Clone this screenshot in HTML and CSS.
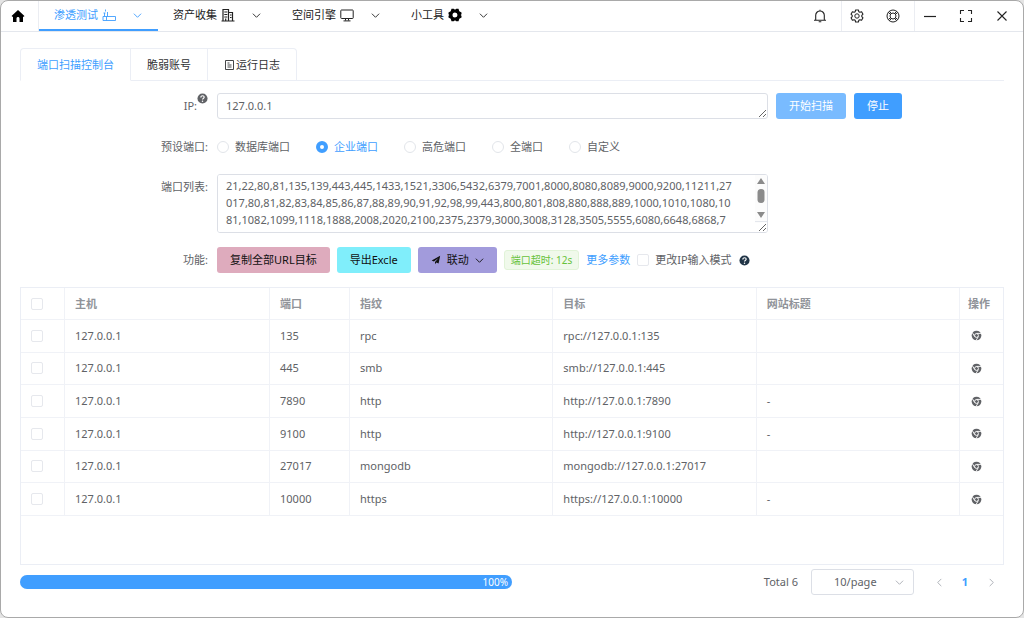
FILE: index.html
```html
<!DOCTYPE html>
<html lang="zh-CN">
<head>
<meta charset="utf-8">
<title>端口扫描控制台</title>
<link rel="stylesheet" href="styles.css">
</head>
<body>
<svg class="sprite" aria-hidden="true">
  <symbol id="down" viewBox="0 0 10 10"><path d="M1 3l4 4 4-4" fill="none" stroke="currentColor"/></symbol>
  <symbol id="help" viewBox="0 0 12 12"><circle cx="6" cy="6" r="5.5" fill="currentColor"/><path d="M4.2 4.8c0-2.4 3.7-2.3 3.6-.1C7.8 6 6 5.800 6 7.200" fill="none" stroke="#fff" stroke-width="1.300"/><circle cx="6" cy="8.900" r=".8" fill="#fff"/></symbol>
  <symbol id="chrome" viewBox="0 0 12 12"><circle cx="6" cy="6" r="5.300" fill="currentColor"/><circle cx="6" cy="6" r="2.100" fill="none" stroke="#fff" stroke-width="1"/><path d="M6 3.700h5.300M4 7.200L1.300 2.600M8 7.200l-2.700 4.600" stroke="#fff" stroke-width="1"/></symbol>
</svg>
<div class="window">
  <header class="topbar">
    <button class="home" aria-label="首页"><svg class="icon" viewBox="0 0 14 14"><path d="M7 1L.8 6.800c-.3.500 0 .9.500.9H2V13h3.500V9.500c0-2 3-2 3 0V13H12V7.700h.7c.5 0 .8-.4.5-.9z" fill="currentColor"/></svg></button>
    <nav class="menu">
      <button class="menu-item active"><span>渗透测试</span><svg class="icon" viewBox="0 0 14 14"><path d="M1 8.500h12.500v4H1zM4.500 8.500v4M2.500 8.500V5M1.500 5h2M3.500 1.500v2M5.500 8.500V4" fill="none" stroke="currentColor" stroke-width=".9"/></svg><svg class="arrow"><use href="#down"/></svg></button>
      <button class="menu-item"><span>资产收集</span><svg class="icon" viewBox="0 0 14 14"><path d="M2 13V1.500h5.500V13M7.500 4.500H11.500V13M.5 13h13M3.300 4h3M3.300 6.500h3M3.300 9h3M9 7h1.500M9 9.500h1.500M4.700 10.500V13" fill="none" stroke="currentColor" stroke-width="1.200"/></svg><svg class="arrow"><use href="#down"/></svg></button>
      <button class="menu-item"><span>空间引擎</span><svg class="icon" viewBox="0 0 14 14"><path d="M1.500 2h11a.7.700 0 0 1 .7.700v7.100a.7.700 0 0 1-.7.700h-11a.7.700 0 0 1-.7-.7V2.700a.7.700 0 0 1 .7-.7zM5.500 10.500v2M8.500 10.500v2M3.500 12.900h7" fill="none" stroke="currentColor"/></svg><svg class="arrow"><use href="#down"/></svg></button>
      <button class="menu-item"><span>小工具</span><svg class="icon" viewBox="0 0 14 14"><path d="M3.500.8h2.200L7 1.800 8.300.8h2.200l.8 2.500 2.200 1.200v1.700L12.600 7l.9.800v1.700l-2.200 1.200-.8 2.500H8.300L7 12.200l-1.300 1H3.500l-.8-2.500L.5 9.500V7.800L1.400 7l-.9-.8V4.500l2.200-1.200zM7 4.500a2.500 2.500 0 1 0 0 5 2.500 2.500 0 0 0 0-5z" fill="#000" fill-rule="evenodd"/></svg><svg class="arrow"><use href="#down"/></svg></button>
    </nav>
    <div class="tools">
      <button aria-label="通知"><svg class="icon" viewBox="0 0 14 14"><path d="M2.700 11V6.300a4.300 4.300 0 0 1 8.600 0V11M1 11.300h12M7 .8V2M5.700 12.800h2.600" fill="none" stroke="currentColor" stroke-width="1.100"/></svg></button>
    </div>
    <div class="tools ruled">
      <button aria-label="设置"><svg class="icon" viewBox="0 0 14 14"><path d="M5.600 1h2.800l.4 1.700 1.100.6 1.700-.5L13 5.200 11.800 6.400v1.200L13 8.800l-1.400 2.400-1.700-.5-1.100.6L8.400 13H5.600l-.4-1.700-1.100-.6-1.700.5L1 8.800l1.200-1.200V6.400L1 5.200l1.400-2.400 1.700.5 1.100-.6z" fill="none" stroke="currentColor" stroke-width="1.100" stroke-linejoin="round"/><circle cx="7" cy="7" r="2.200" fill="none" stroke="currentColor"/></svg></button>
      <button aria-label="帮助"><svg class="icon" viewBox="0 0 14 14"><g fill="none" stroke="currentColor"><circle cx="7" cy="7" r="6"/><circle cx="7" cy="7" r="3"/><path d="M2.300 3.500l2.200 1.800M3.500 2.300l1.800 2.200M11.700 3.500L9.500 5.300M10.500 2.300L8.700 4.500M2.300 10.500l2.200-1.800M3.500 11.700l1.800-2.200M11.700 10.500L9.500 8.700M10.500 11.700L8.700 9.500"/></g></svg></button>
    </div>
    <div class="tools ruled">
      <button aria-label="最小化"><svg class="icon" viewBox="0 0 14 14"><path d="M1 7.500h12" stroke="currentColor" stroke-width="1.200"/></svg></button>
      <button aria-label="全屏"><svg class="icon" viewBox="0 0 14 14"><path d="M1.500 5V1.500H5M9 1.500h3.500V5M12.500 9v3.500H9M5 12.500H1.500V9" fill="none" stroke="currentColor" stroke-width="1.100"/></svg></button>
      <button aria-label="关闭"><svg class="icon" viewBox="0 0 14 14"><path d="M2.500 2.500l9 9M11.500 2.500l-9 9" stroke="currentColor" stroke-width="1.100"/></svg></button>
    </div>
  </header>

  <main class="content">
    <div class="tabs" role="tablist">
      <button class="tab selected" role="tab" aria-selected="true">端口扫描控制台</button>
      <button class="tab" role="tab">脆弱账号</button>
      <button class="tab" role="tab"><svg class="note" viewBox="0 0 12 12"><path d="M1.500 1.500h8v9h-8zM3.500 4h2M3.500 6h4M3.500 8h4" fill="none" stroke="currentColor" stroke-width=".9"/></svg>运行日志</button>
    </div>

    <form class="form">
      <label class="label" for="ip">IP:<svg class="tip"><use href="#help"/></svg></label>
      <div class="row">
        <textarea id="ip" class="box ip" rows="1">127.0.0.1</textarea>
        <button type="button" class="btn start">开始扫描</button>
        <button type="button" class="btn stop">停止</button>
      </div>

      <span class="label">预设端口:</span>
      <div class="radios">
        <label><input type="radio" name="preset">数据库端口</label>
        <label><input type="radio" name="preset" checked><span>企业端口</span></label>
        <label><input type="radio" name="preset">高危端口</label>
        <label><input type="radio" name="preset">全端口</label>
        <label><input type="radio" name="preset">自定义</label>
      </div>

      <label class="label list-label" for="ports">端口列表:</label>
      <div class="list">
        <textarea id="ports" class="ports">21,22,80,81,135,139,443,445,1433,1521,3306,5432,6379,7001,8000,8080,8089,9000,9200,11211,27
017,80,81,82,83,84,85,86,87,88,89,90,91,92,98,99,443,800,801,808,880,888,889,1000,1010,1080,10
81,1082,1099,1118,1888,2008,2020,2100,2375,2379,3000,3008,3128,3505,5555,6080,6648,6868,7</textarea>
        <svg class="rail" viewBox="0 0 12 48" aria-hidden="true"><path d="M0 0h12v48H0z" fill="#fcfcfc"/><path d="M2 9l4-6 4 6zM2 37l4 6 4-6z" fill="#8b8b8b"/><rect x="2.500" y="14" width="7" height="14" rx="3.500" fill="#8b8b8b"/><path d="M0 46.500h12" stroke="#e4e7ed"/></svg>
      </div>

      <span class="label">功能:</span>
      <div class="row actions">
        <button type="button" class="btn copy">复制全部URL目标</button>
        <button type="button" class="btn export">导出Excle</button>
        <button type="button" class="btn link"><svg class="plane" viewBox="0 0 12 12"><path d="M11 1L.8 6.500l2.700 1.200L9 3.500 4.800 8.300V11l1.600-2 2.700 1.200z" fill="currentColor"/></svg>联动<svg class="arrow"><use href="#down"/></svg></button>
        <span class="tag">端口超时: 12s</span>
        <a class="more" href="#">更多参数</a>
        <label class="mode"><input type="checkbox">更改IP输入模式</label>
        <svg class="tip dark"><use href="#help"/></svg>
      </div>
    </form>

    <div class="table-box">
      <table>
        <colgroup><col class="c-check"><col class="c-host"><col class="c-port"><col><col><col><col class="c-op"></colgroup>
        <thead>
          <tr><th><input type="checkbox" aria-label="全选"></th><th>主机</th><th>端口</th><th>指纹</th><th>目标</th><th>网站标题</th><th>操作</th></tr>
        </thead>
        <tbody>
          <tr><td><input type="checkbox" aria-label="选择"></td><td>127.0.0.1</td><td>135</td><td>rpc</td><td>rpc://127.0.0.1:135</td><td></td><td><button class="open" aria-label="打开"><svg><use href="#chrome"/></svg></button></td></tr>
          <tr><td><input type="checkbox" aria-label="选择"></td><td>127.0.0.1</td><td>445</td><td>smb</td><td>smb://127.0.0.1:445</td><td></td><td><button class="open" aria-label="打开"><svg><use href="#chrome"/></svg></button></td></tr>
          <tr><td><input type="checkbox" aria-label="选择"></td><td>127.0.0.1</td><td>7890</td><td>http</td><td>http://127.0.0.1:7890</td><td>-</td><td><button class="open" aria-label="打开"><svg><use href="#chrome"/></svg></button></td></tr>
          <tr><td><input type="checkbox" aria-label="选择"></td><td>127.0.0.1</td><td>9100</td><td>http</td><td>http://127.0.0.1:9100</td><td>-</td><td><button class="open" aria-label="打开"><svg><use href="#chrome"/></svg></button></td></tr>
          <tr><td><input type="checkbox" aria-label="选择"></td><td>127.0.0.1</td><td>27017</td><td>mongodb</td><td>mongodb://127.0.0.1:27017</td><td></td><td><button class="open" aria-label="打开"><svg><use href="#chrome"/></svg></button></td></tr>
          <tr><td><input type="checkbox" aria-label="选择"></td><td>127.0.0.1</td><td>10000</td><td>https</td><td>https://127.0.0.1:10000</td><td>-</td><td><button class="open" aria-label="打开"><svg><use href="#chrome"/></svg></button></td></tr>
        </tbody>
      </table>
    </div>

    <footer class="footer">
      <div class="progress" role="progressbar" aria-valuenow="100"><div class="bar" style="width:100%">100%</div></div>
      <div class="pager">
        <span>Total 6</span>
        <span class="size"><select aria-label="每页条数"><option>10/page</option><option>20/page</option><option>50/page</option></select><svg class="arrow"><use href="#down"/></svg></span>
        <button aria-label="上一页"><svg class="arrow" viewBox="0 0 10 10"><path d="M7 1L3 5l4 4" fill="none" stroke="currentColor"/></svg></button>
        <button class="current">1</button>
        <button aria-label="下一页"><svg class="arrow" viewBox="0 0 10 10"><path d="M3 1l4 4-4 4" fill="none" stroke="currentColor"/></svg></button>
      </div>
    </footer>
  </main>
</div>
</body>
</html>
```
FILE: styles.css
```css
* { box-sizing: border-box; }
body {
  margin: 0;
  background: #e4e4e4;
  color: #606266;
  font: 11px/16px "Noto Sans", "Noto Sans CJK SC", sans-serif;
}
button, input, select, textarea { font: inherit; color: inherit; margin: 0; }
button { border: 0; padding: 0; background: none; cursor: pointer; }
.sprite { position: absolute; width: 0; height: 0; }
svg { display: block; flex: none; }
.icon { width: 14px; height: 14px; }
.arrow { width: 9px; height: 9px; }

.window {
  display: flex;
  flex-direction: column;
  min-height: 100vh;
  border: 1px solid #a9a9a9;
  border-radius: 8px;
  background: #fff;
}

.topbar {
  display: flex;
  height: 31px;
  border-bottom: 1px solid #e4e7ed;
  color: #222;
}
.home { display: flex; align-items: center; justify-content: center; width: 37px; padding-right: 3px; color: #000; }
.menu { display: flex; flex: 1; border-left: 1px solid #ebedf2; }
.menu-item { display: flex; align-items: center; padding: 0 16px 0 15px; border-bottom: 2px solid transparent; }
.menu-item .icon { margin: 0 17px 0 4px; }
.menu-item.active { color: #409eff; border-color: #409eff; }
.tools { display: flex; align-items: center; gap: 22px; padding: 0 14px 0 8px; }
.tools.ruled { border-left: 1px solid #ebedf2; }

.content { display: flex; flex-direction: column; flex: 1; padding: 16px 19px 22px; }
.tabs { display: flex; height: 33px; border-bottom: 1px solid #ebeef5; }
.tab {
  display: flex;
  align-items: center;
  height: 33px;
  padding: 0 16px;
  border: 1px solid #ebeef5;
  border-left-width: 0;
  color: #303133;
}
.tab:first-child { border-left-width: 1px; border-radius: 4px 0 0 0; }
.tab:last-child { border-radius: 0 4px 0 0; }
.tab.selected { color: #409eff; border-bottom-color: #fff; }
.note { width: 12px; height: 12px; }

.form {
  display: grid;
  grid-template-columns: 188px 1fr;
  column-gap: 9px;
  margin-top: 12px;
}
.label { display: flex; justify-content: flex-end; align-items: center; }
.list-label { align-items: flex-start; padding-top: 5px; }
.tip { width: 11px; height: 11px; }
.label .tip { align-self: flex-start; }
.row { display: flex; align-items: center; }
.box, .list {
  width: 70%;
  border: 1px solid #dcdfe6;
  border-radius: 3px;
}
.box, .ports {
  display: block;
  padding: 3px 8px;
  background: #fff;
  line-height: 17px;
  outline: 0;
}
.ip { height: 26px; overflow: hidden; }
.list { position: relative; height: 59px; overflow: hidden; }
.ports {
  width: 100%;
  height: 57px;
  padding-block: 2px;
  border: 0;
  overflow: hidden;
  white-space: pre;
}
.rail { position: absolute; top: 0; right: 0; width: 12px; height: 48px; }

.btn {
  display: flex;
  align-items: center;
  justify-content: center;
  height: 26px;
  padding: 0 13px;
  border-radius: 3px;
  color: #111;
  white-space: nowrap;
}
.start { margin-left: 8px; background: #79bbff; color: #fff; }
.stop { margin-left: 8px; background: #409eff; color: #fff; }
.copy { background: #deabbd; }
.export { background: #80eefb; }
.link { gap: 6px; background: #a29bdc; }
.plane { width: 10px; height: 10px; }

.radios { display: flex; align-items: center; gap: 26px; height: 55px; }
.radios label { display: flex; align-items: center; gap: 6px; }
input[type="radio"] {
  appearance: none;
  width: 12px;
  height: 12px;
  border: 1px solid #e2e5ea;
  border-radius: 50%;
  background: #fff;
}
input[type="radio"]:checked { border: 4px solid #409eff; }
input[type="radio"]:checked + span { color: #409eff; }
input[type="checkbox"] {
  appearance: none;
  display: block;
  width: 12px;
  height: 12px;
  border: 1px solid #e6e8ed;
  border-radius: 2px;
  background: #fff;
}

.actions { gap: 7px; height: 54px; }
.tag {
  padding: 1px 6px;
  border: 1px solid #e1f3d8;
  border-radius: 3px;
  background: #f0f9eb;
  color: #67c23a;
  font-size: 10px;
}
.more { color: #409eff; text-decoration: none; }
.mode { display: flex; align-items: center; gap: 6px; }
.dark { color: #213547; }

.table-box { flex: 1; border: 1px solid #ebeef5; }
table { width: 100%; height: 228px; table-layout: fixed; border-collapse: separate; border-spacing: 0; }
.c-check { width: 43px; }
.c-host { width: 205px; }
.c-port { width: 80px; }
.c-op { width: 44px; }
th, td { padding: 0 10px; border-bottom: 1px solid #f0f2f7; text-align: left; }
th + th, td + td { border-left: 1px solid #f0f2f7; }
th { height: 32px; color: #909399; font-weight: 700; }
th:last-child, td:last-child { padding: 0 8px; }
.open { display: block; margin-left: 3px; }
.open svg { width: 11px; height: 11px; }

.footer { display: flex; align-items: center; justify-content: space-between; padding-top: 4px; }
.progress { width: 50%; height: 14px; border-radius: 7px; background: #ebeef5; }
.bar {
  height: 14px;
  padding-right: 4px;
  border-radius: 7px;
  background: #409eff;
  color: #fff;
  font-size: 10px;
  line-height: 14px;
  text-align: right;
}
.pager { display: flex; align-items: center; }
.size { position: relative; margin: 0 12px 0 13px; }
.size select {
  display: block;
  appearance: none;
  width: 103px;
  height: 26px;
  padding: 0 22px;
  border: 1px solid #dcdfe6;
  border-radius: 3px;
  background: #fff;
}
.size .arrow { position: absolute; right: 10px; top: 9px; color: #a8abb2; }
.pager button { display: flex; justify-content: center; width: 26px; color: #a8abb2; }
.pager .current { color: #409eff; font-weight: 700; }
```
